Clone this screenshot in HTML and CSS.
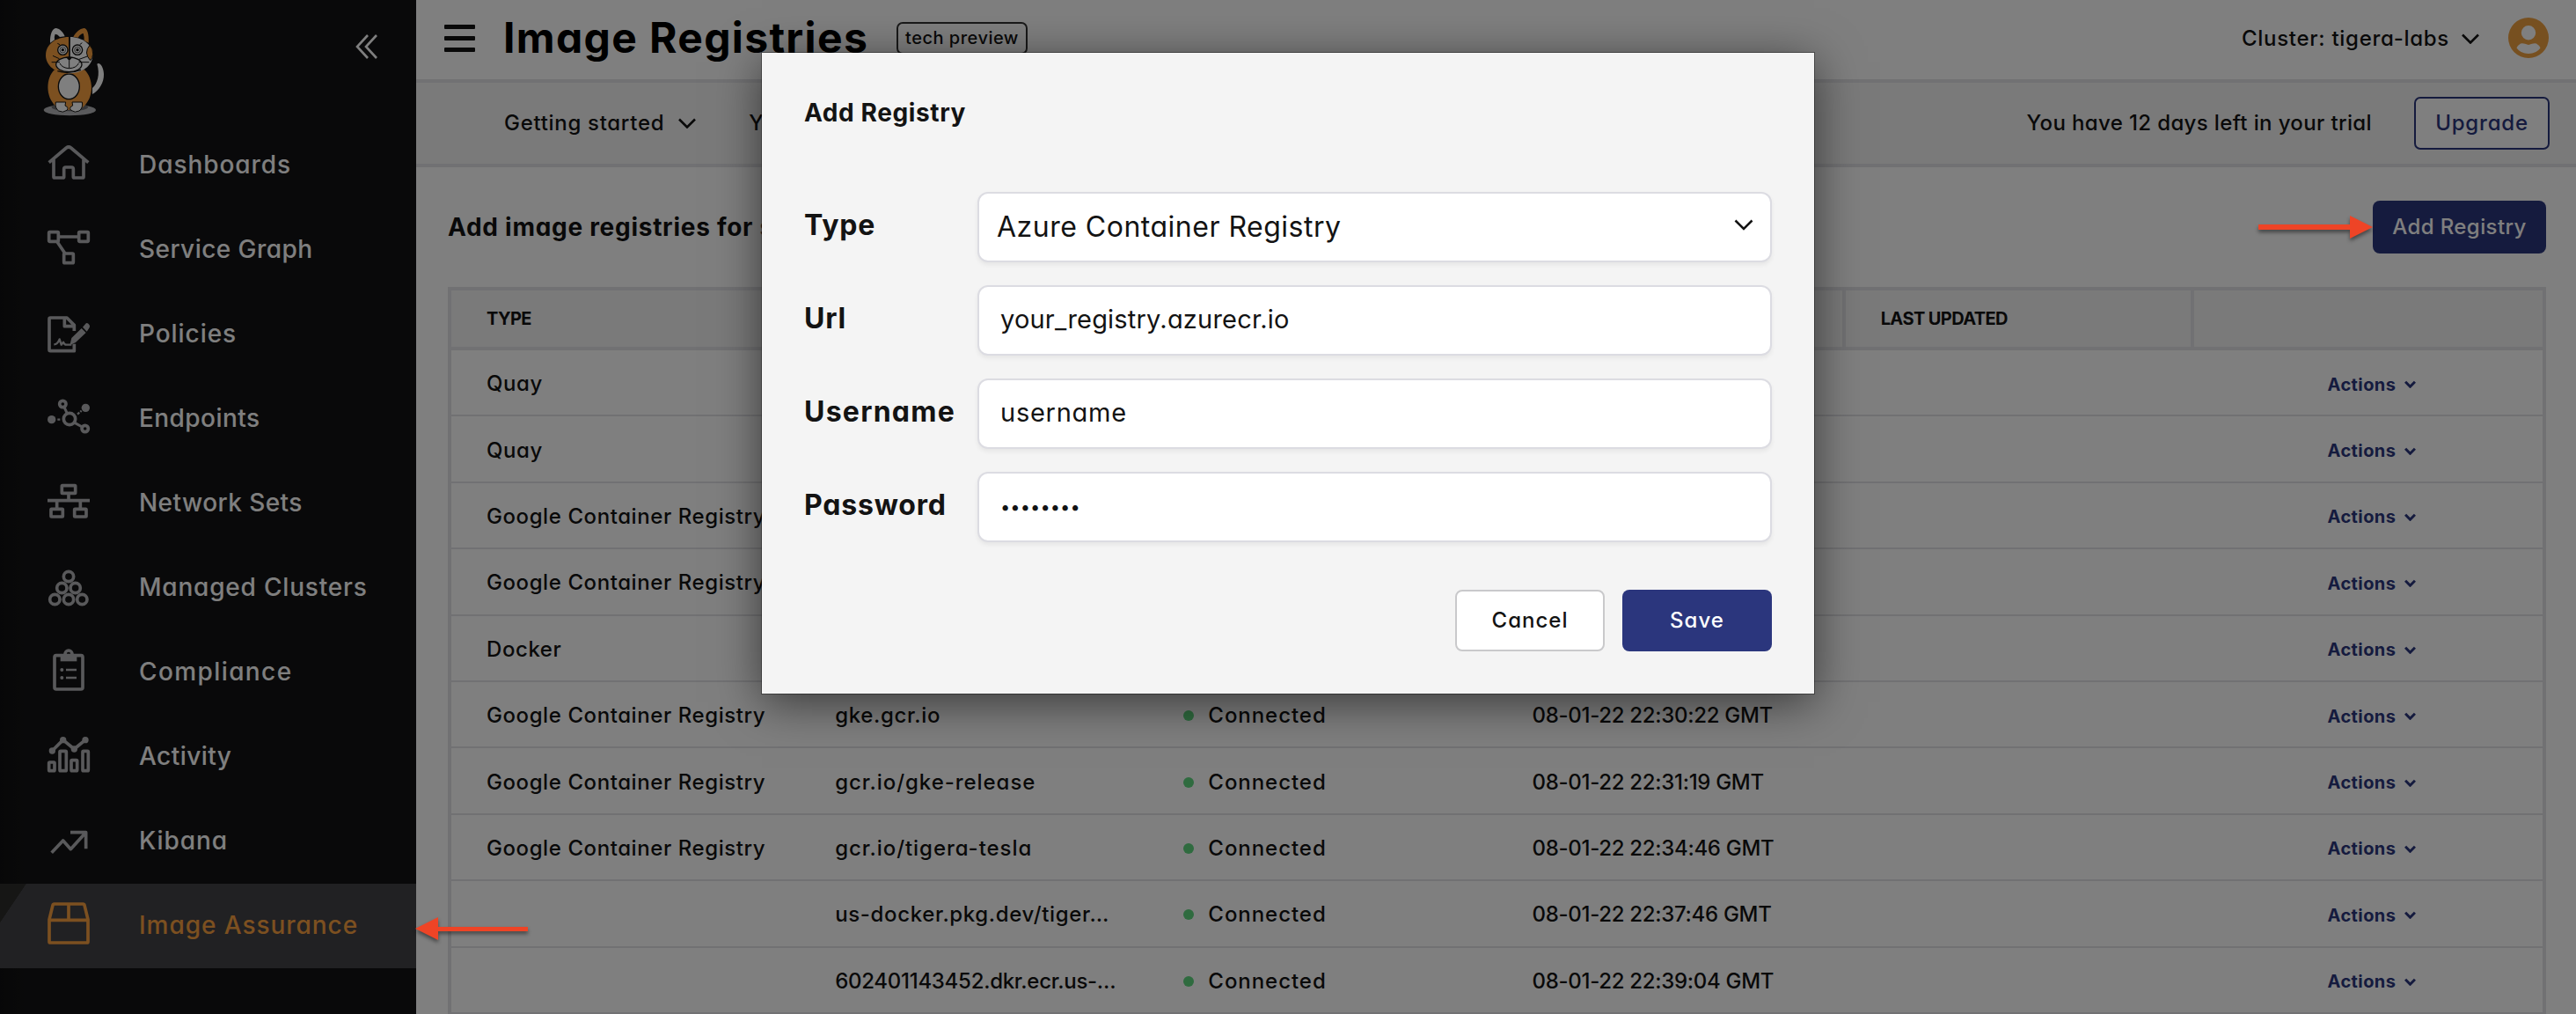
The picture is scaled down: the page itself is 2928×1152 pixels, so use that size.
FILE: index.html
```html
<!DOCTYPE html>
<html lang="en">
<head>
<meta charset="utf-8">
<title>Image Registries</title>
<link rel="stylesheet" href="styles.css">
</head>
<body>
<div class="app">
  <aside class="sidebar">
    <div class="brand">
      <svg class="cat" viewBox="0 0 270 360" aria-hidden="true">
        <ellipse cx="118" cy="315" rx="89" ry="19" fill="#b4b5b8"/>
        <ellipse cx="118" cy="305" rx="62" ry="14" fill="#6c6d70"/>
        <path d="M211 158C220 150 233 168 234 192C235 222 218 248 195 261V240C212 226 222 192 211 158Z" fill="#fff"/>
        <path d="M66 178C36 205 34 270 70 302C90 318 148 318 166 302C202 270 198 205 168 178Z" fill="#f9a040"/>
        <ellipse cx="115" cy="235" rx="36" ry="43" fill="#fff" stroke="#131313" stroke-width="4"/>
        <path d="M70 288H104L102 300Q116 306 108 316Q94 326 80 318Q66 308 70 288ZM126 288H160Q164 308 150 318Q136 326 122 316Q114 306 128 300Z" fill="#fff" stroke="#131313" stroke-width="3"/>
        <path d="M51 86C50 58 58 36 72 36C84 38 96 50 101 64L84 66Q76 56 68 56Q64 66 66 76Z" fill="#fff"/>
        <path d="M182 86C184 58 178 36 166 36C152 38 138 50 130 66L146 68Q156 54 164 54Q168 66 167 78Z" fill="#f9a040"/>
        <path d="M115 66C70 66 36 92 36 128C36 164 70 190 115 190Z" fill="#f9a040"/>
        <path d="M119 66C160 66 196 92 196 128C196 164 160 190 112 190Z" fill="#fff"/>
        <path d="M186 94Q198 106 197 124Q196 138 188 146Q164 120 186 94Z" fill="#f9a040" stroke="#131313" stroke-width="3"/>
        <path d="M117 66V138" stroke="#131313" stroke-width="5"/>
        <ellipse cx="115" cy="160" rx="44" ry="25" fill="#fff" stroke="#131313" stroke-width="4"/>
        <path d="M116 146V172M84 156Q92 172 116 173Q140 172 148 156" fill="none" stroke="#131313" stroke-width="3"/>
        <path d="M104 134H128L116 147Z" fill="#131313"/>
        <path d="M60 130L82 140M56 152H84M178 132L150 142M184 152H148M76 88L84 92M152 92L160 86" stroke="#131313" stroke-width="3"/>
        <path d="M76 182Q112 194 156 178" fill="none" stroke="#131313" stroke-width="4"/>
        <g fill="#fff" stroke="#131313" stroke-width="4"><circle cx="94" cy="110" r="17"/><circle cx="144" cy="110" r="17"/></g>
        <g fill="#131313"><circle cx="94" cy="110" r="5"/><circle cx="144" cy="110" r="5"/></g>
        <g fill="none" stroke="#131313" stroke-width="2"><circle cx="94" cy="110" r="10"/><circle cx="144" cy="110" r="10"/></g>
      </svg>
      <svg class="collapse" viewBox="0 0 26 30" aria-hidden="true"><path d="M14 2L2 15L14 28M24 2L12 15L24 28" fill="none" stroke="currentColor" stroke-width="2.6"/></svg>
    </div>
    <nav class="nav">
      <a class="nav-item"><svg viewBox="0 0 144 144"><path d="M5 62L64 12Q72 6 80 12L139 62M21 52V111Q21 114 24 114H53Q56 114 56 111V84Q56 78 62 78H82Q88 78 88 84V111Q88 114 91 114H120Q123 114 123 111V52"/></svg><span>Dashboards</span></a>
      <a class="nav-item nav-tight"><svg viewBox="0 0 144 144"><rect x="5" y="11" width="32" height="32" rx="3"/><rect x="107" y="11" width="32" height="32" rx="3"/><rect x="56" y="84" width="32" height="32" rx="3"/><path d="M40 27H104M34 46L60 84"/></svg><span>Service Graph</span></a>
      <a class="nav-item"><svg viewBox="0 0 144 144"><path d="M91 60V40L66 15H10Q6 15 6 19V124Q6 128 10 128H91V104M58 15V44H90"/><path class="thin" d="M22 106Q34 106 41 88L47 107L54 98Q58 107 64 107H82"/><path class="solid" d="M82 84L116 51L131 66L96 99L76 109ZM120 47L130 35Q136 30 143 40Q146 45 142 50L134 62Z"/></svg><span>Policies</span></a>
      <a class="nav-item nav-tight"><svg viewBox="0 0 144 144"><circle cx="75" cy="72" r="20"/><circle cx="52" cy="21" r="11"/><circle cx="128" cy="105" r="11"/><circle class="solid" cx="130" cy="34" r="14"/><circle class="solid" cx="14" cy="74" r="14"/><path class="link" d="M57 32L67 53M93 85L118 99"/><path class="thin" d="M34 74H46M102 56L116 44" stroke-dasharray="9 4"/></svg><span>Endpoints</span></a>
      <a class="nav-item nav-tight"><svg viewBox="0 0 144 144"><rect x="49" y="11" width="46" height="26" rx="2"/><rect x="12" y="91" width="40" height="26" rx="2"/><rect x="92" y="91" width="40" height="26" rx="2"/><path d="M0 62H144M72 40V62M32 62V88M112 62V88"/></svg><span>Network Sets</span></a>
      <a class="nav-item nav-mid"><svg viewBox="0 0 144 144"><circle cx="72" cy="33" r="17"/><circle cx="49" cy="72" r="17"/><circle cx="95" cy="72" r="17"/><circle cx="25" cy="111" r="17"/><circle cx="72" cy="111" r="17"/><circle cx="118" cy="111" r="17"/></svg><span>Managed Clusters</span></a>
      <a class="nav-item nav-wide"><svg viewBox="0 0 144 144"><rect x="24" y="14" width="96" height="115" rx="6"/><path class="solid" d="M44 10H100V34H44Z"/><circle cx="72" cy="9" r="12"/><circle class="solid" cx="49" cy="63" r="6"/><circle class="solid" cx="49" cy="90" r="6"/><path class="thin" d="M63 63H99M63 90H99"/></svg><span>Compliance</span></a>
      <a class="nav-item nav-tight"><svg viewBox="0 0 144 144"><path d="M16 51L53 14L91 45L129 14"/><g class="solid"><circle cx="16" cy="51" r="11"/><circle cx="53" cy="14" r="11"/><circle cx="91" cy="45" r="11"/><circle cx="129" cy="14" r="11"/></g><rect x="5" y="90" width="19" height="29" rx="3"/><rect x="42" y="52" width="22" height="67" rx="3"/><rect x="81" y="83" width="20" height="36" rx="3"/><rect x="120" y="52" width="19" height="67" rx="3"/></svg><span>Activity</span></a>
      <a class="nav-item"><svg viewBox="0 0 144 144"><path d="M14 110L53 69L79 98L130 42M78 41H131V97"/></svg><span>Kibana</span></a>
      <a class="nav-item active"><svg viewBox="0 0 144 144"><path d="M6 50L18 1Q19 -3 23 -3H121Q125 -3 126 1L138 50V125Q138 129 134 129H10Q6 129 6 125ZM6 52H138M72 -3V52"/></svg><span>Image Assurance</span></a>
    </nav>
  </aside>
  <main class="main">
    <header class="topbar">
      <div class="menu"><i></i><i></i><i></i></div>
      <h1>Image Registries</h1>
      <span class="pill">tech preview</span>
      <div class="cluster">Cluster: tigera-labs
        <svg class="chev" viewBox="0 0 20 12"><path d="M1 1.5L10 10.5L19 1.5"/></svg>
      </div>
      <svg class="avatar" viewBox="0 0 46 46"><path fill-rule="evenodd" fill="#efa040" d="M23 0A23 23 0 1 1 23 46A23 23 0 1 1 23 0ZM23 9A8.2 8.2 0 1 0 23 25.400A8.200 8.200 0 1 0 23 9ZM23 31Q17 28.500 14 29.500Q10 32 9.500 34.500Q14 41 23 41Q32 41 36.500 34.500Q36 32 32 29.500Q29 28.500 23 31Z"/></svg>
    </header>
    <div class="subbar">
      <span class="menu-link">Getting started</span>
      <svg class="chev" viewBox="0 0 20 12"><path d="M1 1.500L10 10.500L19 1.500"/></svg>
      <span class="menu-link second">Y</span>
      <span class="trial">You have 12 days left in your trial</span>
      <button class="upgrade">Upgrade</button>
    </div>
    <section class="content">
      <div class="intro"><h2>Add image registries for s</h2><button class="add">Add Registry</button></div>
      <div class="table">
        <div class="thead"><div>TYPE</div><div></div><div></div><div></div><div>LAST UPDATED</div><div></div></div>
        <div class="row"><div>Quay</div><div></div><div></div><div></div><div></div><div class="act">Actions<svg viewBox="0 0 12 8"><path d="M1 1.500L6 6.500L11 1.500"/></svg></div></div>
        <div class="row"><div>Quay</div><div></div><div></div><div></div><div></div><div class="act">Actions<svg viewBox="0 0 12 8"><path d="M1 1.500L6 6.500L11 1.500"/></svg></div></div>
        <div class="row"><div>Google Container Registry</div><div></div><div></div><div></div><div></div><div class="act">Actions<svg viewBox="0 0 12 8"><path d="M1 1.500L6 6.500L11 1.500"/></svg></div></div>
        <div class="row"><div>Google Container Registry</div><div></div><div></div><div></div><div></div><div class="act">Actions<svg viewBox="0 0 12 8"><path d="M1 1.500L6 6.500L11 1.500"/></svg></div></div>
        <div class="row"><div>Docker</div><div></div><div></div><div></div><div></div><div class="act">Actions<svg viewBox="0 0 12 8"><path d="M1 1.500L6 6.500L11 1.500"/></svg></div></div>
        <div class="row"><div>Google Container Registry</div><div class="url short">gke.gcr.io</div><div class="status">Connected</div><div class="date">08-01-22 22:30:22 GMT</div><div></div><div class="act">Actions<svg viewBox="0 0 12 8"><path d="M1 1.500L6 6.500L11 1.500"/></svg></div></div>
        <div class="row"><div>Google Container Registry</div><div class="url">gcr.io/gke-release</div><div class="status">Connected</div><div class="date">08-01-22 22:31:19 GMT</div><div></div><div class="act">Actions<svg viewBox="0 0 12 8"><path d="M1 1.500L6 6.500L11 1.500"/></svg></div></div>
        <div class="row"><div>Google Container Registry</div><div class="url">gcr.io/tigera-tesla</div><div class="status">Connected</div><div class="date">08-01-22 22:34:46 GMT</div><div></div><div class="act">Actions<svg viewBox="0 0 12 8"><path d="M1 1.500L6 6.500L11 1.500"/></svg></div></div>
        <div class="row"><div></div><div class="url short">us-docker.pkg.dev/tiger…</div><div class="status">Connected</div><div class="date">08-01-22 22:37:46 GMT</div><div></div><div class="act">Actions<svg viewBox="0 0 12 8"><path d="M1 1.500L6 6.500L11 1.500"/></svg></div></div>
        <div class="row"><div></div><div class="url digits">602401143452.dkr.ecr.us-…</div><div class="status">Connected</div><div class="date">08-01-22 22:39:04 GMT</div><div></div><div class="act">Actions<svg viewBox="0 0 12 8"><path d="M1 1.500L6 6.500L11 1.500"/></svg></div></div>
      </div>
    </section>
  </main>
</div>
<div class="overlay"></div>
<div class="modal">
  <h3>Add Registry</h3>
  <div class="form">
    <label>Type</label><div class="field select">Azure Container Registry<svg viewBox="0 0 22 13"><path d="M1.500 1.500L11 11L20.500 1.500"/></svg></div>
    <label>Url</label><div class="field url-field">your_registry.azurecr.io</div>
    <label class="wide">Username</label><div class="field">username</div>
    <label>Password</label><div class="field password">••••••••</div>
  </div>
  <div class="buttons"><button class="cancel">Cancel</button><button class="save">Save</button></div>
</div>
<svg class="arrow arrow-add" viewBox="0 0 130 26"><path d="M0 10H104V0L130 13L104 26V16H0Z"/></svg>
<svg class="arrow arrow-nav" viewBox="0 0 128 26"><path d="M128 11H26V0L0 13L26 26V16H128Z"/></svg>
</body>
</html>
```
FILE: styles.css
```css
* { box-sizing: border-box; }
body {
  margin: 0; width: 2928px; height: 1152px; overflow: hidden; position: relative;
  font: 500 24px/1 Inter, sans-serif; font-feature-settings: "cv11", "ss03";
  color: #131313; background: #fff; white-space: nowrap;
}
h1, h2, h3 { margin: 0; font-weight: 700; }
button { font: inherit; font-feature-settings: inherit; letter-spacing: inherit; padding: 0; }
.app { display: grid; grid-template-columns: 473px 1fr; height: 1152px; }

.sidebar { background: linear-gradient(90deg, #0f0f10 0, #131314 28px); overflow: hidden; }
.brand { height: 140px; padding: 20px 43px 0 40px; display: flex; justify-content: space-between; align-items: flex-start; }
.cat { width: 90px; height: 120px; }
.collapse { width: 26px; height: 30px; margin-top: 18px; color: #fff; }
.nav-item { display: flex; align-items: center; height: 96px; padding-left: 54px; gap: 56px; font-size: 28px; letter-spacing: .95px; color: #fff; }
.nav-item span { padding-bottom: 2px; }
.nav-mid { letter-spacing: .8px; }
.nav-tight { letter-spacing: .44px; }
.nav-wide { letter-spacing: 1.4px; }
.nav-item svg { width: 48px; height: 48px; overflow: visible; fill: none; stroke: #b2b3b6; stroke-width: 11; stroke-linecap: butt; stroke-linejoin: round; }
.nav-item .thin { stroke-width: 7; }
.nav-item .link { stroke-width: 9; }
.nav-item .solid { fill: #b2b3b6; stroke: none; }
.active { color: #f9a040; background: linear-gradient(124deg, #2d2d2b 0 24.5px, #424247 25px); }
.nav-item.active svg { stroke: #f9a040; }

.topbar { height: 94px; border-bottom: 4px solid #e2e2e7; display: flex; align-items: center; padding: 0 31px 4px 32px; }
.menu { width: 35px; height: 31px; display: flex; flex-direction: column; justify-content: space-between; }
.menu i { height: 5px; border-radius: 1px; background: #131313; }
h1 { font-size: 48px; letter-spacing: 1.35px; margin-left: 32px; color: #000; width: 447px; }
.pill { width: 149px; height: 37px; border: 2px solid #333; border-radius: 7px; font-size: 20px; line-height: 32px; text-align: center; letter-spacing: .5px; }
.cluster { margin-left: auto; display: flex; align-items: center; gap: 14px; letter-spacing: .72px; padding-top: 1px; }
.chev { width: 20px; height: 12px; fill: none; stroke: #131313; stroke-width: 2.6; }
.avatar { width: 46px; height: 46px; margin-left: 33px; }
.subbar { height: 96px; background: #f4f4f5; border-bottom: 4px solid #e2e2e7; display: flex; align-items: center; padding: 0 30px 0 100px; letter-spacing: .7px; }
.subbar .chev { margin-left: 16px; }
.second { margin-left: 60px; }
.trial { margin-left: auto; letter-spacing: .37px; }
.upgrade { width: 154px; height: 60px; margin-left: 48px; border: 2px solid #2b367d; border-radius: 7px; background: #fff; color: #2b367d; letter-spacing: .8px; }

.content { padding: 38px 34px 0 36px; }
.intro { display: flex; justify-content: space-between; align-items: center; height: 60px; margin-bottom: 38px; }
h2 { font-size: 28px; letter-spacing: .72px; }
.add { width: 197px; height: 60px; border: 0; border-radius: 8px; background: #2b367d; color: #fff; letter-spacing: .4px; }
.table { border: 4px solid #e2e2e7; border-bottom: 0; }
.thead, .row { display: grid; grid-template-columns: repeat(6, 1fr); }
.thead { height: 68px; background: #f4f4f5; border-bottom: 4px solid #e2e2e7; font-size: 20px; font-weight: 700; letter-spacing: -.6px; }
.thead div { display: flex; align-items: center; padding-left: 40px; border-right: 4px solid #e2e2e7; }
.thead div:last-child { border-right: 0; }
.row { height: 75.4px; border-bottom: 2px solid #e2e2e7; letter-spacing: .58px; }
.row div { display: flex; align-items: center; padding: 3px 0 0 40px; }
.row .url { letter-spacing: .95px; }
.row .short { letter-spacing: .65px; }
.row .digits { letter-spacing: -.28px; }
.row .date { letter-spacing: -.3px; }
.row .status { gap: 16px; letter-spacing: .95px; }
.status::before { content: ""; width: 12px; height: 12px; border-radius: 50%; background: #5ed67f; }
.row .act { justify-content: center; padding: 4px 0 0 8px; gap: 10px; font-size: 20px; font-weight: 700; letter-spacing: .42px; color: #2b367d; }
.act svg { width: 13px; height: 9px; fill: none; stroke: #2b367d; stroke-width: 2.8; }

.overlay { position: absolute; inset: 0; background: rgba(0, 0, 0, .5); }
.modal {
  position: absolute; left: 866px; top: 60px; width: 1196px; height: 728px; padding: 48px 48px 48px;
  background: #f4f4f4; box-shadow: 0 0 0 1px rgba(0, 0, 0, .35), 0 10px 50px rgba(0, 0, 0, .55);
}
h3 { font-size: 28px; line-height: 40px; letter-spacing: .6px; margin-bottom: 70px; }
.form { display: grid; grid-template-columns: 197px 1fr; row-gap: 26px; }
label { font-size: 32px; font-weight: 700; letter-spacing: .8px; line-height: 75px; }
.wide { letter-spacing: 1.25px; }
.field { height: 80px; border: 2px solid #dcdce2; border-radius: 12px; background: #fff; box-shadow: 0 3px 5px rgba(0, 0, 0, .06); padding: 0 20px 3px 24px; display: flex; align-items: center; font-size: 29px; font-weight: 400; letter-spacing: .75px; }
.select { font-size: 32px; letter-spacing: .5px; padding: 0 19px 1px 20px; justify-content: space-between; }
.select svg { width: 22px; height: 13px; fill: none; stroke: #131313; stroke-width: 2.6; margin-bottom: 4px; }
.url-field { letter-spacing: .2px; }
.password { font-size: 20px; letter-spacing: .1px; padding-bottom: 0; }
.buttons { display: flex; justify-content: flex-end; gap: 20px; margin-top: 54px; }
.buttons button { width: 170px; height: 70px; border-radius: 8px; letter-spacing: 1px; }
.buttons .cancel { background: #fff; border: 2px solid #c9c9cb; color: #131313; }
.buttons .save { background: #2b367d; border: 0; color: #fff; }

.arrow { position: absolute; fill: #ee4426; overflow: visible; filter: drop-shadow(0 3px 2px rgba(0, 0, 0, .45)); }
.arrow-add { left: 2567px; top: 245px; width: 130px; height: 26px; }
.arrow-nav { left: 472px; top: 1042px; width: 128px; height: 26px; }
```
